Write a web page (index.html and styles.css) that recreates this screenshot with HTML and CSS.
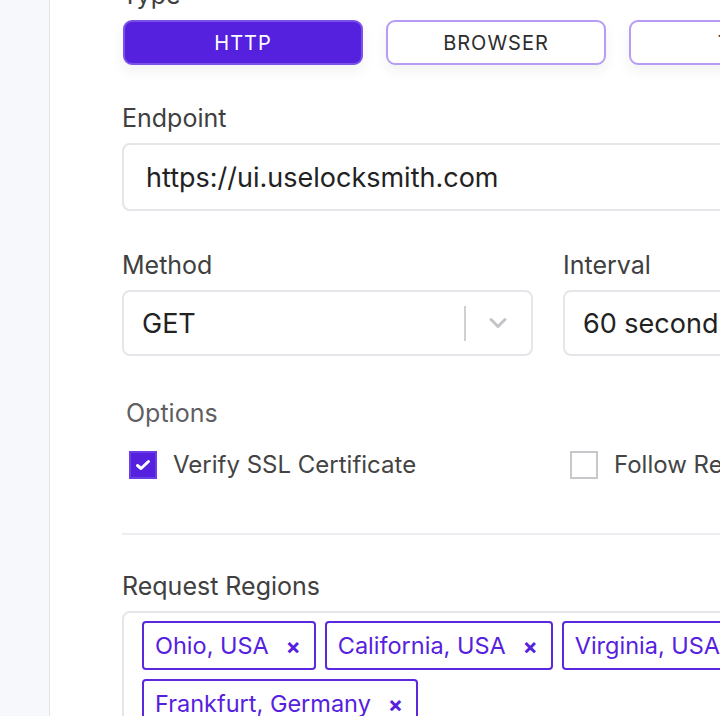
FILE: index.html
```html
<!DOCTYPE html>
<html lang="en">
<head>
<meta charset="utf-8">
<title>Monitor settings</title>
<link rel="stylesheet" href="styles.css">
</head>
<body>
<div class="layout">
  <aside class="sidebar"></aside>
  <main class="main">
    <div class="form">
      <div class="field">
        <div class="label">Type</div>
        <div class="type-row">
          <button class="type-btn type-active w240">HTTP</button>
          <button class="type-btn w220">BROWSER</button>
          <button class="type-btn w220">TCP</button>
        </div>
      </div>

      <div class="field">
        <div class="label">Endpoint</div>
        <div class="input input-wide">https://ui.uselocksmith.com</div>
      </div>

      <div class="row2">
        <div class="field">
          <div class="label">Method</div>
          <div class="input select">
            <span class="select-value">GET</span>
            <span class="select-sep"></span>
            <svg class="chevron" width="24" height="16" viewBox="0 0 24 16"><path d="M5 4.5 L12 11.5 L19 4.5" fill="none" stroke="#c4c4c8" stroke-width="3" stroke-linecap="round" stroke-linejoin="round"/></svg>
          </div>
        </div>
        <div class="field">
          <div class="label">Interval</div>
          <div class="input select">
            <span class="select-value">60 seconds</span>
          </div>
        </div>
      </div>

      <div class="field options">
        <div class="label label-light">Options</div>
        <div class="opt-grid">
          <label class="opt">
            <span class="cb cb-checked">
              <svg width="18" height="14" viewBox="0 0 18 14"><path d="M3.5 7.5 L7 10.5 L14.5 3.5" fill="none" stroke="#fff" stroke-width="3" stroke-linecap="round" stroke-linejoin="round"/></svg>
            </span>
            <span class="opt-text">Verify SSL Certificate</span>
          </label>
          <label class="opt">
            <span class="cb"></span>
            <span class="opt-text">Follow Redirects</span>
          </label>
        </div>
      </div>

      <hr class="divider">

      <div class="field">
        <div class="label">Request Regions</div>
        <div class="tags-box">
          <span class="tag">Ohio, USA<span class="tag-x">×</span></span>
          <span class="tag">California, USA<span class="tag-x">×</span></span>
          <span class="tag">Virginia, USA<span class="tag-x">×</span></span>
          <span class="tag">Frankfurt, Germany<span class="tag-x">×</span></span>
        </div>
      </div>
    </div>
  </main>
</div>
</body>
</html>
```

FILE: styles.css
```css
* { box-sizing: border-box; }
html, body {
  margin: 0;
  padding: 0;
  height: 100%;
  overflow: hidden;
  background: #fff;
  font-family: Inter, "Noto Sans", sans-serif;
  color: #333;
}
.layout {
  display: flex;
  height: 716px;
}
.sidebar {
  flex: 0 0 50px;
  background: #f7f8fc;
  border-right: 1px solid #e4e5ea;
}
.main {
  flex: 1;
  padding-left: 72px;
  overflow: hidden;
}
.form {
  margin-top: -20px;
  width: 1000px;
}
.field { display: flex; flex-direction: column; }
.label {
  font-size: 25px;
  line-height: 30px;
  height: 30px;
  color: #404040;
  margin-bottom: 10px;
  white-space: nowrap;
}
.label-light { color: #5f5f63; margin-left: 4px; }

.type-row {
  display: flex;
  gap: 23px;
  margin-bottom: 38px;
  padding-left: 1px;
}
.type-btn {
  height: 45px;
  border-radius: 9px;
  border: 2px solid #b69cf6;
  background: #fff;
  font-family: Inter, "Noto Sans", sans-serif;
  font-size: 20px;
  letter-spacing: 1px;
  color: #2d2d2d;
  box-shadow: 0 6px 14px rgba(0,0,0,0.06);
  padding: 0;
}
.type-active {
  background: #5521de;
  border-color: #7a52e8;
  color: #fff;
}
.w240 { width: 240px; }
.w220 { width: 220px; }

.input {
  height: 68px;
  border: 2px solid #e5e5ea;
  border-radius: 8px;
  display: flex;
  align-items: center;
  font-size: 27px;
  color: #222;
  background: #fff;
  white-space: nowrap;
}
.input-wide {
  width: 900px;
  padding-left: 22px;
  margin-bottom: 39px;
}
.row2 {
  display: grid;
  grid-template-columns: 411px 400px;
  gap: 30px;
  margin-bottom: 42px;
}
.select {
  height: 66px;
  padding-left: 18px;
}
.select-value { flex: 1; }
.select-sep {
  width: 2px;
  height: 35px;
  background: #d0d0d4;
  margin-right: 20px;
}
.chevron { margin-right: 21px; }

.options .label { margin-bottom: 23px; }
.opt-grid {
  display: grid;
  grid-template-columns: 441px 441px;
  padding-left: 7px;
  margin-bottom: 54px;
}
.opt {
  display: flex;
  align-items: center;
  gap: 16px;
  height: 28px;
  font-size: 24px;
  line-height: 28px;
  color: #444;
}
.cb {
  flex: 0 0 28px;
  width: 28px;
  height: 28px;
  border: 2px solid #c8c8cc;
  background: #fff;
  display: flex;
  align-items: center;
  justify-content: center;
}
.cb-checked {
  background: #5521de;
  border-color: #6a3ee6;
}
.opt-text { white-space: nowrap; }

.divider {
  border: 0;
  border-top: 2px solid #eeeef2;
  margin: 0 0 36px 0;
  width: 900px;
}

.tags-box {
  width: 800px;
  border: 2px solid #e5e5ea;
  border-radius: 8px;
  padding: 8px 18px 12px;
  display: flex;
  flex-wrap: wrap;
  column-gap: 9px;
  row-gap: 9px;
}
.tag {
  height: 49px;
  border: 2px solid #5b28e0;
  border-radius: 4px;
  display: inline-flex;
  align-items: center;
  padding: 0 13px 0 11px;
  font-size: 23.5px;
  color: #5521de;
  white-space: nowrap;
}
.tag-x {
  font-weight: 700;
  margin-left: 17px;
  font-size: 22px;
}
```
